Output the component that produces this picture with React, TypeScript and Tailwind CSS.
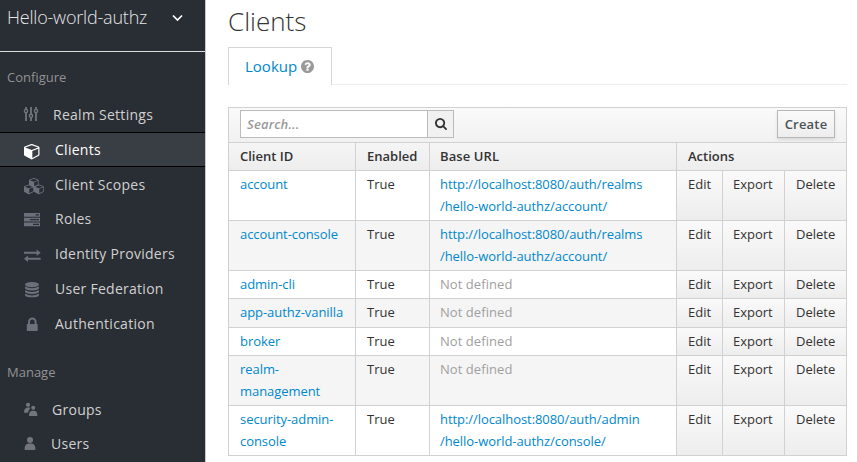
import React from "react";

const CUBE =
  "M896 1629l640-349v-636l-640 233v752zm-64-865l698-254-698-254-698 254zm832-252v768q0 35-18 65t-49 47l-704 384q-28 16-61 16t-61-16l-704-384q-31-17-49-47t-18-65v-768q0-40 23-73t61-47l704-256q22-8 44-8t44 8l704 256q38 14 61 47t23 73z";
const SEARCH =
  "M1216 832q0-185-131.5-316.5t-316.5-131.5-316.5 131.5-131.5 316.5 131.5 316.5 316.5 131.5 316.5-131.5 131.5-316.5zm512 832q0 52-38 90t-90 38q-54 0-90-38l-343-342q-179 124-399 124-143 0-273.5-55.5t-225-150-150-225-55.5-273.5 55.5-273.5 150-225 225-150 273.5-55.5 273.5 55.5 225 150 150 225 55.5 273.5q0 220-124 399l343 343q37 37 37 90z";
const QUESTION =
  "M1024 1376v-192q0-14-9-23t-23-9h-192q-14 0-23 9t-9 23v192q0 14 9 23t23 9h192q14 0 23-9t9-23zm256-672q0-88-55.5-163t-138.5-116-170-41q-243 0-371 213-15 24 8 42l132 100q7 6 19 6 16 0 25-12 53-68 86-92 34-24 86-24 48 0 85.5 26t37.5 59q0 38-20 61t-68 45q-63 28-115.5 86.5t-52.5 125.5v36q0 14 9 23t23 9h192q14 0 23-9t9-23q0-19 21.5-49.5t54.5-49.5q32-18 49-28.5t46-35 44.5-48 28-60.5 12.5-81zm384 192q0 209-103 385.5t-279.5 279.5-385.5 103-385.5-103-279.5-279.5-103-385.5 103-385.5 279.5-279.5 385.5-103 385.5 103 279.5 279.5 103 385.5z";

const icons: Record<string, React.ReactNode> = {
  sliders: (
    <g fill="none" stroke="#72767b" strokeWidth="1.8">
      <path d="M2 9v2.5M2 14.5V23M7 9v7M7 19.5V23M12 9v2.5M12 14.5V23" />
      <circle cx="2" cy="13" r="1.6" strokeWidth="1.4" />
      <circle cx="7" cy="17.8" r="1.6" strokeWidth="1.4" />
      <circle cx="12" cy="13" r="1.6" strokeWidth="1.4" />
    </g>
  ),
  cube: <path fill="#fff" transform="translate(0 9.8) scale(.0093)" d={CUBE} />,
  cubes: (
    <g fill="#6b707b">
      <path transform="translate(5 10.2) scale(.0058)" d={CUBE} />
      <path transform="translate(0 16.7) scale(.0059)" d={CUBE} />
      <path transform="translate(10 16.7) scale(.0059)" d={CUBE} />
    </g>
  ),
  tasks: (
    <g>
      <path fill="#6b707b" d="M0 11h16v3.8H0zM0 15.8h16v3.8H0zM0 20.5h16v3.8H0z" />
      <path fill="#292d34" d="M11.5 12.3H15v1.2h-3.5zM6 17.1h9v1.2H6zM9 21.8h6V23H9z" />
    </g>
  ),
  exchange: (
    <path fill="#6b707b" d="M0 15.8h12.7v-2.3l4 3.2-4 3.2v-2.1H0zM16.7 23.8H4V26l-4-3.2 4-3.2v2.2h12.7z" />
  ),
  database: (
    <g fill="#6b707b">
      <ellipse cx="8" cy="13.6" rx="7" ry="2.7" />
      <path d="M1 15.6q7 3.4 14 0v1.5q0 2.3-7 2.3t-7-2.3zM1 19.2q7 3.4 14 0v1.4q0 2.3-7 2.3t-7-2.3zM1 22.8q7 3.4 14 0v1.2q0 2.3-7 2.3t-7-2.3z" />
    </g>
  ),
  lock: (
    <path
      fill="#6b707b"
      fillRule="evenodd"
      d="M4 18v-2.3a4.3 4.3 0 0 1 8.6 0V18h.5q.6 0 .6.7v5.6q0 .7-.6.7H3.4q-.6 0-.6-.7v-5.6q0-.7.6-.7zM6 18h4.6v-2.3a2.3 2.3 0 0 0-4.6 0z"
    />
  ),
  groups: (
    <g fill="#72767b" transform="translate(0 -1)">
      <circle cx="4" cy="12.8" r="2.1" />
      <circle cx="9.2" cy="15.8" r="2" />
      <path d="M0 20.8q0-4.8 3.5-5.2h2.3q.4 1.6-.3 2.2-1.3.8-1.5 3zM5 24q0-5 3-5.2h2.4q3 .2 3 5.2z" />
    </g>
  ),
  user: (
    <g fill="#72767b">
      <circle cx="6" cy="13" r="3" />
      <path d="M.6 23q-.2-5.8 3.4-6.4h4q3.6.6 3.4 6.4z" />
    </g>
  ),
};

function NavItem({ icon, label, text = "w-[31px]", row = "h-[35px]", active = false }: {
  icon: string; label: string; text?: string; row?: string; active?: boolean;
}) {
  return (
    <a className={`flex items-center pl-6 ${row} ${active ? "border-y border-black bg-[#393d44] text-white" : "text-[#d1d1d1]"}`}>
      <span className={`h-full shrink-0 ${text}`}>
        <svg width="22" height="34" className="block overflow-visible">{icons[icon]}</svg>
      </span>
      <span className="text-[14px] leading-5 tracking-[0.27px] whitespace-nowrap">{label}</span>
    </a>
  );
}

const rows = [
  { id: ["account"], url: ["http://localhost:8080/auth/realms", "/hello-world-authz/account/"], h: "h-[50px]" },
  { id: ["account-console"], url: ["http://localhost:8080/auth/realms", "/hello-world-authz/account/"], h: "h-[50px]" },
  { id: ["admin-cli"], url: null, h: "h-[28px]" },
  { id: ["app-authz-vanilla"], url: null, h: "h-[29px]" },
  { id: ["broker"], url: null, h: "h-[28px]" },
  { id: ["realm-", "management"], url: null, h: "h-[50px]" },
  { id: ["security-admin-", "console"], url: ["http://localhost:8080/auth/admin", "/hello-world-authz/console/"], h: "h-[50px]" },
];

const COLS = "grid grid-cols-[127px_74px_247px_46px_62px_61px]";
const GRAD = "bg-linear-to-b from-[#fafafa] to-[#ededed]";

function Lines({ lines }: { lines: string[] }) {
  return (
    <>
      {lines.map((l) => (
        <div key={l} className="whitespace-nowrap">{l}</div>
      ))}
    </>
  );
}

export default function App() {
  return (
    <div className="flex h-[462px] w-[857px] overflow-hidden bg-white font-['Open_Sans',sans-serif] text-[13px] leading-[22px] text-[#333]">
      <aside className="flex w-[206px] shrink-0 flex-col border-r border-[#c8cacc] bg-[#292d34]">
        <div className="flex h-[52px] items-start justify-between border-b border-[#dcdcdc] pr-[22px] pl-[7px]">
          <span className="mt-[5px] text-[18px] leading-6 font-light tracking-[-0.2px] text-[#e6e6e6]">Hello-world-authz</span>
          <svg width="11" height="8" className="mt-[14px]">
            <path d="M1 1.5l4.5 4.5L10 1.5" fill="none" stroke="#fff" strokeWidth="1.7" />
          </svg>
        </div>
        <h2 className="h-[46px] pt-[14px] pl-[7px] text-[13px] text-[#929292]">Configure</h2>
        <nav>
          <NavItem icon="sliders" label="Realm Settings" text="w-[29px]" row="h-[34px]" />
          <NavItem icon="cube" label="Clients" active />
          <NavItem icon="cubes" label="Client Scopes" />
          <NavItem icon="tasks" label="Roles" row="h-[34px]" />
          <NavItem icon="exchange" label="Identity Providers" />
          <NavItem icon="database" label="User Federation" />
          <NavItem icon="lock" label="Authentication" />
        </nav>
        <h2 className="h-[52px] pt-[20px] pl-[7px] text-[13px] text-[#929292]">Manage</h2>
        <nav>
          <NavItem icon="groups" label="Groups" text="w-[28px]" row="h-[34px]" />
          <NavItem icon="user" label="Users" text="w-[27px]" row="h-[34px]" />
        </nav>
      </aside>

      <main className="w-[641px] pl-[22px]">
        <h1 className="h-[47px] pt-[5px] text-[26px] leading-8 font-light">Clients</h1>
        <div className="flex h-[38px]">
          <div className="flex w-[104px] items-center border border-b-0 border-[#d6d6d6] pb-[2px] pl-4 text-[15px] text-[#0088ce]">
            Lookup
            <svg viewBox="128 128 1536 1536" className="mt-[1px] ml-[4px] h-[13px] w-[13px] shrink-0">
              <path fill="#999" d={QUESTION} />
            </svg>
          </div>
          <div className="flex-1 border-b border-[#ececec]" />
        </div>

        <section className="mt-[22px] border-x border-t border-[#d1d1d1]">
          <div className="flex h-[35px] items-start justify-between border-b border-[#d1d1d1] bg-linear-to-b from-[#fafafa] to-[#f1f1f1] pt-[2px] pr-[11px] pl-[11px]">
            <div className="flex h-7 w-[214px] border border-[#bbb] bg-white">
              <span className="flex-1 pt-[2px] pl-[6px] font-semibold tracking-[0.2px] text-[#999] italic">Search...</span>
              <span className="flex w-[26px] items-center justify-center border-l border-[#bbb] bg-[#f1f1f1]">
                <svg width="12" height="12" viewBox="64 128 1664 1664">
                  <path fill="#333" d={SEARCH} />
                </svg>
              </span>
            </div>
            <button className="h-7 w-[58px] border border-[#b7b7b7] bg-linear-to-b from-[#fafafa] to-[#ededed] text-[13px] leading-[26px] font-semibold tracking-[0.2px] text-[#4d5258] shadow-[0_2px_3px_rgba(0,0,0,0.1)]">
              Create
            </button>
          </div>

          <div className="grid h-7 grid-cols-[127px_74px_247px_1fr] border-b border-[#d1d1d1] bg-linear-to-b from-[#f5f5f5] to-[#ededed] font-semibold">
            <div className="border-r border-[#d1d1d1] pt-[2px] pl-[11px]">Client ID</div>
            <div className="border-r border-[#d1d1d1] pt-[2px] pl-[11px]">Enabled</div>
            <div className="border-r border-[#d1d1d1] pt-[2px] pl-[10px] tracking-[0.1px]">Base URL</div>
            <div className="pt-[2px] pl-[11px]">Actions</div>
          </div>

          {rows.map((r, i) => (
            <div key={r.id.join("")} className={`${COLS} ${r.h} border-b border-[#d1d1d1] ${i % 2 ? "bg-[#f5f5f5]" : "bg-white"}`}>
              <div className="border-r border-[#d1d1d1] pt-[2px] pl-[11px] tracking-[-0.06px] text-[#0088ce]"><Lines lines={r.id} /></div>
              <div className="border-r border-[#d1d1d1] pt-[2px] pl-[11px]">True</div>
              <div className={`border-r border-[#d1d1d1] pt-[2px] pl-[10px] ${r.url ? "tracking-[-0.06px] text-[#0088ce]" : "tracking-[0.06px] text-[#a0a0a0]"}`}>
                <Lines lines={r.url ?? ["Not defined"]} />
              </div>
              <div className={`border-r border-[#d1d1d1] pt-[2px] pl-[11px] ${GRAD}`}>Edit</div>
              <div className={`border-r border-[#d1d1d1] pt-[2px] pl-[10px] ${GRAD}`}>Export</div>
              <div className={`pt-[2px] pl-[11px] ${GRAD}`}>Delete</div>
            </div>
          ))}
        </section>
      </main>
    </div>
  );
}
